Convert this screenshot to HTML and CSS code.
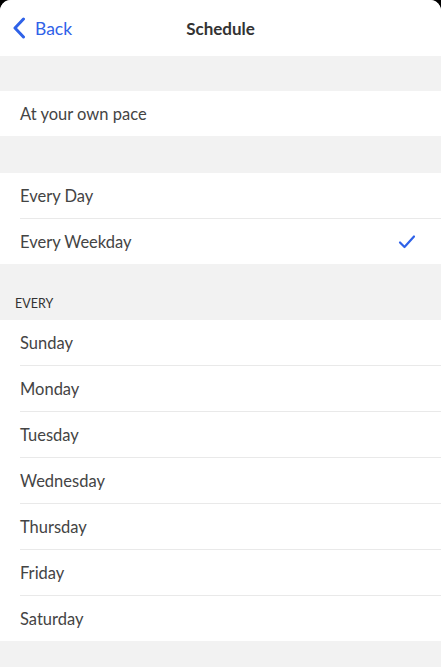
FILE: index.html
```html
<!DOCTYPE html>
<html lang="en">
<head>
    <meta charset="UTF-8">
    <meta name="viewport" content="width=device-width, initial-scale=1.0">
    <link rel="stylesheet" href="styles.css">
    <title>Schedule</title>
</head>
<body>
    <div class="sheet">
        <div class="nav-bar">
            <a class="back" href="#">
                <svg class="back-icon" width="14" height="22" viewBox="0 0 14 22">
                    <path d="M11.5 2 L3 11 L11.5 20" fill="none" stroke="currentColor" stroke-width="3" stroke-linecap="round" stroke-linejoin="round"/>
                </svg>
                <span>Back</span>
            </a>
            <div class="nav-title">Schedule</div>
        </div>

        <div class="spacer"></div>
        <ul class="group">
            <li class="row">At your own pace</li>
        </ul>

        <div class="spacer"></div>
        <ul class="group">
            <li class="row">Every Day</li>
            <li class="row">
                <span>Every Weekday</span>
                <svg class="check" width="18" height="16" viewBox="0 0 18 16">
                    <path d="M2 8.5 L6.5 13 L16 2.5" fill="none" stroke="currentColor" stroke-width="2.2" stroke-linecap="round" stroke-linejoin="round"/>
                </svg>
            </li>
        </ul>

        <div class="section-title">EVERY</div>
        <ul class="group">
            <li class="row">Sunday</li>
            <li class="row">Monday</li>
            <li class="row">Tuesday</li>
            <li class="row">Wednesday</li>
            <li class="row">Thursday</li>
            <li class="row">Friday</li>
            <li class="row">Saturday</li>
        </ul>
        <div class="footer"></div>
    </div>
</body>
</html>
```

FILE: styles.css
```css
* {
    box-sizing: border-box;
}

body {
    margin: 0;
    background-color: #000;
    font-family: Lato, "Noto Sans", sans-serif;
    color: #444;
    overflow: hidden;
}

.sheet {
    background-color: #f2f2f2;
    border-radius: 11px 11px 0 0;
    overflow: hidden;
    min-height: 667px;
}

.nav-bar {
    position: relative;
    height: 56px;
    display: flex;
    align-items: center;
    justify-content: center;
    background-color: #fff;
}

.back {
    position: absolute;
    left: 12px;
    top: 0;
    bottom: 0;
    display: flex;
    align-items: center;
    gap: 9px;
    color: #2f62e8;
    text-decoration: none;
    font-size: 17.5px;
}

.back-icon {
    display: block;
}

.nav-title {
    font-size: 17px;
    font-weight: bold;
    color: #333;
}

.spacer {
    height: 35px;
}

.group + .spacer {
    height: 37px;
}

.group {
    list-style: none;
    margin: 0;
    padding: 0 0 0 20px;
    background-color: #fff;
}

.row {
    height: 45px;
    display: flex;
    align-items: center;
    justify-content: space-between;
    padding-right: 25px;
    font-size: 16.5px;
    color: #444;
}

.row + .row {
    height: 46px;
    border-top: 1px solid #e9e9e9;
}

.check {
    color: #2f62e8;
}

.section-title {
    height: 56px;
    display: flex;
    align-items: flex-end;
    padding: 0 0 9px 15px;
    font-size: 12.5px;
    color: #333;
}
```
